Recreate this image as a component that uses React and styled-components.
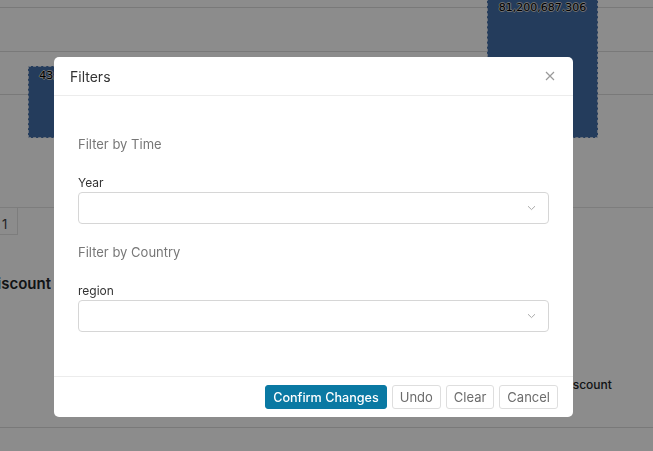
import React from "react"
import styled, { createGlobalStyle } from "styled-components"

const GlobalStyle = createGlobalStyle`
  html, body {
    margin: 0;
    padding: 0;
    background: #ffffff;
    font-family: Inter, "Liberation Sans", sans-serif;
  }
  * {
    box-sizing: border-box;
  }
`

const Page = styled.div`
  position: relative;
  width: 653px;
  height: 451px;
  overflow: hidden;
  background: #ffffff;
`

const Chart = styled.div`
  position: relative;
  height: 138px;
  padding-top: 7px;
  display: flex;
  flex-direction: column;
`

const GridLine = styled.div`
  flex: 1;
  border-top: 1px solid #dcdcdc;
  &:last-child {
    border-bottom: 1px solid #dcdcdc;
  }
`

// bars sit on the chart canvas at their data positions
const Bar = styled.div`
  position: absolute;
  bottom: 0;
  background: #426ea8;
  border: 1px dashed #c8d3e4;
  display: flex;
  justify-content: center;
`

const BarLabel = styled.span`
  font-family: "DejaVu Sans", sans-serif;
  font-size: 11px;
  color: #000;
  margin-top: 2px;
  text-shadow: -1px 0 #cfcfcf, 1px 0 #cfcfcf, 0 -1px #cfcfcf, 0 1px #cfcfcf;
`

const TableRow = styled.div`
  margin-top: 69px;
  display: flex;
  border-top: 1px solid #e4e4e4;
`

const Cell = styled.div`
  width: 18px;
  height: 27px;
  border-right: 1px solid #e4e4e4;
  border-bottom: 1px solid #e4e4e4;
  font-size: 13px;
  color: #444;
  padding: 8px 0 0 2px;
`

const TitleClip = styled.div`
  margin-top: 39px;
  width: 51px;
  display: flex;
  justify-content: flex-end;
  overflow: hidden;
  white-space: nowrap;
  font-size: 15px;
  font-weight: 600;
  color: #212529;
`

const SideTitle = styled.div`
  margin-top: 84px;
  margin-left: 561px;
  font-size: 12px;
  font-weight: 500;
  color: #212529;
  white-space: nowrap;
`

const BottomLine = styled.div`
  margin-top: 35px;
  border-top: 1px solid #dcdcdc;
`

const Backdrop = styled.div`
  position: fixed;
  inset: 0;
  background: rgba(0, 0, 0, 0.45);
  padding: 57px 0 0 54px;
`

const Modal = styled.div`
  width: 519px;
  background: #ffffff;
  border-radius: 5px;
  overflow: hidden;
`

const Header = styled.div`
  height: 39px;
  display: flex;
  align-items: center;
  justify-content: space-between;
  padding: 0 18px 0 16px;
  border-bottom: 1px solid #ececec;
`

const Title = styled.div`
  font-size: 14px;
  color: #333;
  margin-top: 1px;
`

const Close = styled.button`
  border: 0;
  background: none;
  padding: 0;
  display: flex;
  color: #9a9a9a;
`

const Body = styled.div`
  padding: 38px 24px 44px 24px;
  display: flex;
  flex-direction: column;
`

const SectionTitle = styled.div`
  font-size: 13px;
  line-height: 20px;
  color: #777;
  margin-top: ${p => (p.$first ? 0 : 18)}px;
`

const Label = styled.div`
  margin-top: 20px;
  font-size: 12px;
  line-height: 18px;
  color: #333;
`

const Select = styled.div`
  height: 32px;
  border: 1px solid #d6d6d6;
  border-radius: 4px;
  display: flex;
  align-items: center;
  justify-content: flex-end;
  padding-right: 12px;
  color: #aaa;
`

const Footer = styled.div`
  height: 41px;
  border-top: 1px solid #ececec;
  display: flex;
  align-items: center;
  justify-content: flex-end;
  gap: 5px;
  padding: 0 15px 0 0;
`

const Button = styled.button`
  height: 24px;
  padding: 0 7px;
  font-family: Inter, "Liberation Sans", sans-serif;
  font-size: ${p => (p.$primary ? 12.6 : 13)}px;
  border-radius: 3px;
  border: 1px solid ${p => (p.$primary ? "#0a79a3" : "#dedede")};
  background: ${p => (p.$primary ? "#0a79a3" : "#ffffff")};
  color: ${p => (p.$primary ? "#ffffff" : "#6c6c6c")};
  font-weight: ${p => (p.$primary ? 500 : 400)};
`

const Chevron = () => (
  <svg width="9" height="6" viewBox="0 0 9 6" fill="none">
    <path d="M1 1.2 4.5 4.6 8 1.2" stroke="currentColor" strokeWidth="1" />
  </svg>
)

const CloseIcon = () => (
  <svg width="10" height="10" viewBox="0 0 10 10" fill="none">
    <path d="M1 1 9 9M9 1 1 9" stroke="currentColor" strokeWidth="1.2" />
  </svg>
)

const filters = [
  { title: "Filter by Time", label: "Year" },
  { title: "Filter by Country", label: "region" }
]

const App = () => {
  return (
    <Page>
      <GlobalStyle />
      <Chart>
        <GridLine />
        <GridLine />
        <GridLine />
        <Bar style={{ left: 28, width: 110, height: 72 }}>
          <BarLabel>43,912,034.118</BarLabel>
        </Bar>
        <Bar style={{ left: 487, width: 111, height: 140 }}>
          <BarLabel>81,200,687.306</BarLabel>
        </Bar>
      </Chart>
      <TableRow>
        <Cell>1</Cell>
      </TableRow>
      <TitleClip>Sales by Discount</TitleClip>
      <SideTitle>Discount</SideTitle>
      <BottomLine />

      <Backdrop>
        <Modal>
          <Header>
            <Title>Filters</Title>
            <Close>
              <CloseIcon />
            </Close>
          </Header>
          <Body>
            {filters.map((f, i) => (
              <React.Fragment key={f.label}>
                <SectionTitle $first={i === 0}>{f.title}</SectionTitle>
                <Label>{f.label}</Label>
                <Select>
                  <Chevron />
                </Select>
              </React.Fragment>
            ))}
          </Body>
          <Footer>
            <Button $primary>Confirm Changes</Button>
            <Button>Undo</Button>
            <Button>Clear</Button>
            <Button>Cancel</Button>
          </Footer>
        </Modal>
      </Backdrop>
    </Page>
  )
}

export default App
